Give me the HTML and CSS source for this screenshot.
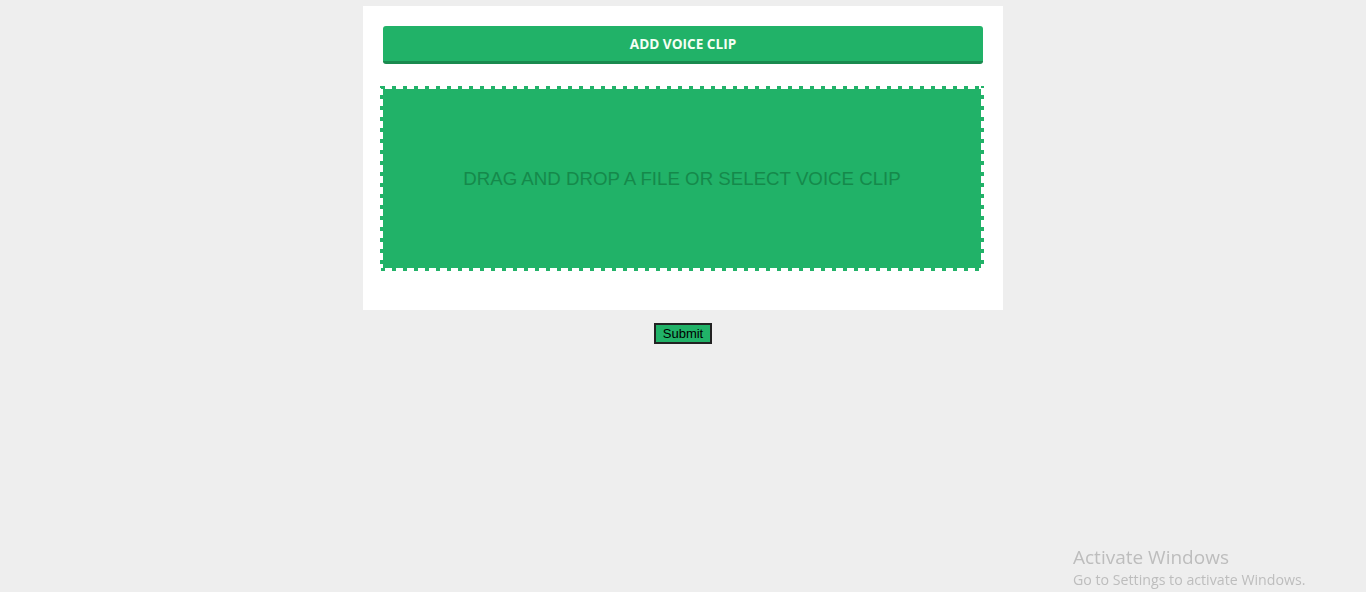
FILE: index.html
```html
<!DOCTYPE html>
<html>
<head>
<meta charset="utf-8">
<link rel="stylesheet" href="styles.css">
</head>
<body>
<div class="page">
  <form class="card">
    <div class="head-btn">ADD VOICE CLIP</div>
    <div class="drop">DRAG AND DROP A FILE OR SELECT VOICE CLIP</div>
  </form>
  <button class="submit" type="button">Submit</button>
</div>
<div class="activate">
  <div class="act-title">Activate Windows</div>
  <div class="act-sub">Go to Settings to activate Windows.</div>
</div>
</body>
</html>
```
FILE: styles.css
```css
html, body {
  margin: 0;
  padding: 0;
  background: #eeeeee;
  height: 100%;
}
.page {
  display: flex;
  flex-direction: column;
  align-items: center;
  padding-top: 6px;
}
.card {
  width: 640px;
  box-sizing: border-box;
  background: #ffffff;
  padding: 20px 20px 39px;
  margin: 0;
  display: flex;
  flex-direction: column;
}
.head-btn {
  padding-bottom: 1px;
  box-sizing: border-box;
  height: 38px;
  background: #21b268;
  border-bottom: 3px solid #1a8a4f;
  border-radius: 3px;
  color: #f4fff4;
  font-family: "Open Sans", "Liberation Sans", sans-serif;
  font-weight: 700;
  font-size: 13.6px;
  letter-spacing: 0;
  display: flex;
  align-items: center;
  justify-content: center;
}
.drop {
  margin: 22px -1px 0 -3px;
  height: 185px;
  box-sizing: border-box;
  border: 3px solid transparent;
  background:
    linear-gradient(#21b268, #21b268) padding-box,
    repeating-linear-gradient(90deg, transparent 0 1px, #21b268 1px 5px, transparent 5px 11px) left top / 100% 3px no-repeat border-box,
    repeating-linear-gradient(90deg, transparent 0 1px, #21b268 1px 5px, transparent 5px 11px) left bottom / 100% 3px no-repeat border-box,
    repeating-linear-gradient(180deg, #21b268 0 2px, transparent 2px 9px, #21b268 9px 11px) left top / 3px 100% no-repeat border-box,
    repeating-linear-gradient(180deg, #21b268 0 2px, transparent 2px 9px, #21b268 9px 11px) right top / 3px 100% no-repeat border-box;
  display: flex;
  align-items: center;
  justify-content: center;
  font-family: "Liberation Sans", Arial, sans-serif;
  font-size: 18.7px;
  color: #15894b;
}
.submit {
  margin-top: 13px;
  width: 58px;
  height: 21px;
  padding: 0;
  background: #21b268;
  border: 2px solid #222;
  border-radius: 0;
  font-family: "Liberation Sans", Arial, sans-serif;
  font-size: 13px;
  color: #000;
}
.activate {
  position: fixed;
  left: 1073px;
  top: 544px;
  font-family: "Open Sans", "Noto Sans", sans-serif;
  color: #bdbdbd;
}
.act-title {
  font-size: 19px;
  line-height: 26px;
}
.act-sub {
  font-size: 14.2px;
  line-height: 19px;
}
```
